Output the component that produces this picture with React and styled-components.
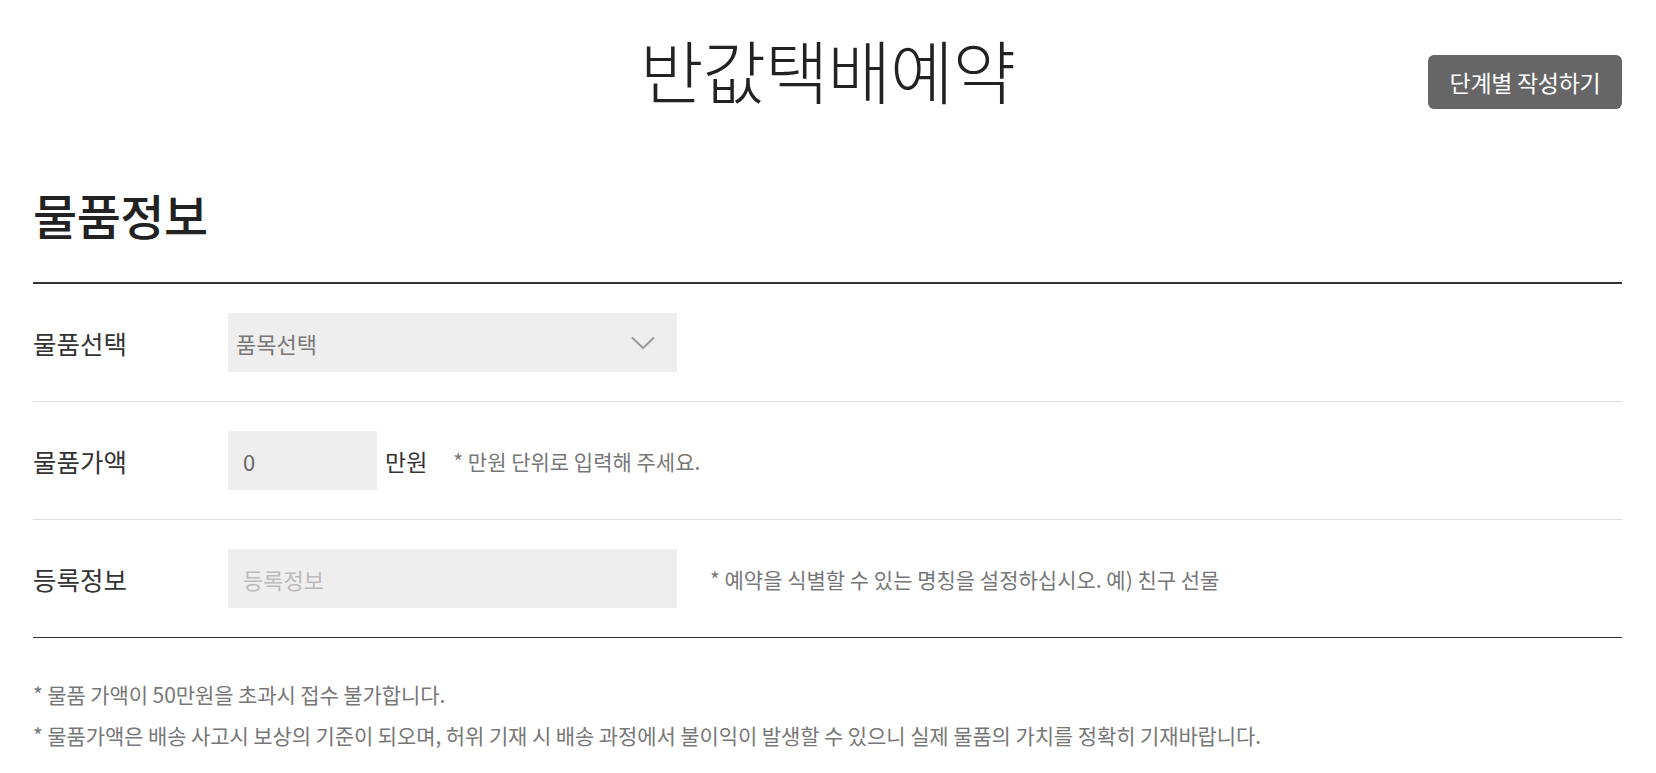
import styled, { createGlobalStyle } from 'styled-components';

const GlobalStyle = createGlobalStyle`
    body {
        margin: 0;
        background: #fff;
        font-family: 'Noto Sans CJK KR', 'Noto Sans', sans-serif;
        color: #333;
    }
`;

const fields = [
    { label: '물품선택', kind: 'select', value: '품목선택' },
    { label: '물품가액', kind: 'price', value: '0', unit: '만원', hint: '* 만원 단위로 입력해 주세요.' },
    {
        label: '등록정보',
        kind: 'text',
        placeholder: '등록정보',
        hint: '* 예약을 식별할 수 있는 명칭을 설정하십시오. 예) 친구 선물',
    },
];

const notices = [
    '* 물품 가액이 50만원을 초과시 접수 불가합니다.',
    '* 물품가액은 배송 사고시 보상의 기준이 되오며, 허위 기재 시 배송 과정에서 불이익이 발생할 수 있으니 실제 물품의 가치를 정확히 기재바랍니다.',
];

const Chevron = () => (
    <svg width="24" height="14" viewBox="0 0 24 14" fill="none">
        <path d="M1 1.5 L12 12 L23 1.5" stroke="#999" strokeWidth="2" />
    </svg>
);

const App = () => {
    return (
        <Page>
            <GlobalStyle />
            <Header>
                <span />
                <Title>반값택배예약</Title>
                <StepButton type="button">단계별 작성하기</StepButton>
            </Header>

            <SectionTitle>물품정보</SectionTitle>

            <Table>
                {fields.map((f) => (
                    <Row key={f.label}>
                        <Label>{f.label}</Label>
                        {f.kind === 'select' && (
                            <SelectBox>
                                <span>{f.value}</span>
                                <Chevron />
                            </SelectBox>
                        )}
                        {f.kind === 'price' && (
                            <>
                                <Field $width={149} defaultValue={f.value} />
                                <Unit>{f.unit}</Unit>
                                <Hint $gap={26}>{f.hint}</Hint>
                            </>
                        )}
                        {f.kind === 'text' && (
                            <>
                                <Field $width={449} placeholder={f.placeholder} />
                                <Hint $gap={33}>{f.hint}</Hint>
                            </>
                        )}
                    </Row>
                ))}
            </Table>

            <Notices>
                {notices.map((n) => (
                    <li key={n}>{n}</li>
                ))}
            </Notices>
        </Page>
    );
};

const Page = styled.div`
    padding: 0 34px 0 33px;
`;

const Header = styled.header`
    display: grid;
    grid-template-columns: 1fr auto 1fr;
    align-items: start;
    padding-top: 27px;
`;

const Title = styled.h1`
    margin: 0;
    font-size: 69px;
    line-height: 85px;
    font-weight: 300;
    letter-spacing: -1px;
    color: #222;
`;

const StepButton = styled.button`
    justify-self: end;
    margin-top: 28px;
    width: 194px;
    height: 54px;
    border: none;
    border-radius: 6px;
    background: #666;
    color: #fff;
    font-family: inherit;
    font-size: 23px;
    letter-spacing: -0.3px;
    cursor: pointer;
`;

const SectionTitle = styled.h2`
    margin: 72px 0 38px;
    font-size: 48px;
    line-height: 60px;
    font-weight: 500;
    letter-spacing: -0.5px;
    color: #222;
`;

const Table = styled.div`
    border-top: 2px solid #333;
    border-bottom: 1px solid #333;
`;

const Row = styled.div`
    display: flex;
    align-items: center;
    padding: 29px 0;
    & + & {
        border-top: 1px solid #ddd;
    }
`;

const Label = styled.div`
    width: 195px;
    flex-shrink: 0;
    font-size: 25.5px;
    color: #333;
`;

const SelectBox = styled.div`
    box-sizing: border-box;
    width: 449px;
    height: 59px;
    display: flex;
    align-items: center;
    justify-content: space-between;
    padding: 0 22px 0 8px;
    background: #eee;
    font-size: 22px;
    color: #777;
`;

const Field = styled.input`
    box-sizing: border-box;
    width: ${(p) => p.$width}px;
    height: 59px;
    padding: 0 15px;
    border: none;
    outline: none;
    background: #eee;
    font-family: inherit;
    font-size: 22px;
    color: #666;
    &::placeholder {
        color: #bbb;
    }
`;

const Unit = styled.span`
    margin-left: 8px;
    font-size: 23px;
    color: #333;
`;

const Hint = styled.span`
    margin-left: ${(p) => p.$gap}px;
    font-size: 21px;
    color: #777;
`;

const Notices = styled.ul`
    list-style: none;
    margin: 36px 0 0;
    padding: 0;
    li {
        font-size: 21px;
        line-height: 41px;
        letter-spacing: -0.1px;
        color: #777;
    }
`;

export default App;
